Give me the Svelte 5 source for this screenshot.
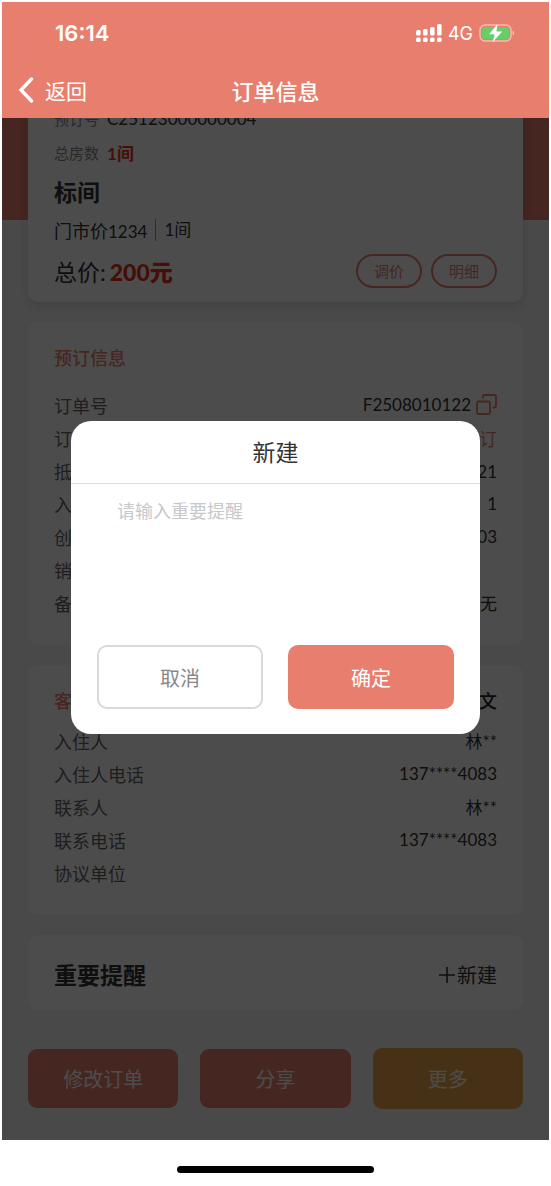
<script>
  let reminder = $state('');
  let showModal = $state(true);

  const booking = [
    { label: '订单号', value: 'F2508010122', copy: true },
    { label: '订单状态', value: '预订', accent: true },
    { label: '抵离时间', value: '2025-08-01 至 08-21' },
    { label: '入住天数', value: '1' },
    { label: '创建时间', value: '2025-08-01 15:03' },
    { label: '销售员', value: '' },
    { label: '备注', value: '无' }
  ];

  const guest = [
    { label: '入住人', value: '林**' },
    { label: '入住人电话', value: '137****4083' },
    { label: '联系人', value: '林**' },
    { label: '联系电话', value: '137****4083' },
    { label: '协议单位', value: '' }
  ];
</script>

<div class="phone">
  <header>
    <div class="status">
      <span class="time">16:14</span>
      <div class="signals">
        <svg width="26" height="19" viewBox="0 0 26 19" fill="#fff">
          <rect x="0" y="6" width="4.600" height="5.500" rx="1.500" />
          <rect x="7" y="5" width="4.600" height="6.500" rx="1.500" />
          <rect x="14" y="3" width="4.600" height="8.500" rx="1.500" />
          <rect x="21" y="0" width="4.600" height="11.500" rx="1.500" />
          <rect x="0" y="13.500" width="4.600" height="4.500" rx="1.500" />
          <rect x="7" y="13.500" width="4.600" height="4.500" rx="1.500" />
          <rect x="14" y="13.500" width="4.600" height="4.500" rx="1.500" />
          <rect x="21" y="13.500" width="4.600" height="4.500" rx="1.500" />
        </svg>
        <span class="net">4G</span>
        <svg width="36" height="18" viewBox="0 0 36 18">
          <rect x="1" y="1" width="31" height="16" rx="5" fill="none" stroke="#f4bdb4" stroke-width="1.400" />
          <rect x="3" y="3" width="27" height="12" rx="3" fill="#65cf68" />
          <path d="M33.500 6.500q1.800 .7 1.800 2.500t-1.800 2.500z" fill="#f4bdb4" />
          <path d="M18.500 0L10 10.300H15.600L13.800 18L23.200 7.500H17.400z" fill="#fff" />
        </svg>
      </div>
    </div>
    <nav>
      <button class="back">
        <svg width="16" height="26" viewBox="0 0 16 26" fill="none" stroke="#fff" stroke-width="3.400">
          <path d="M13.500 2L3 13L13.500 24" stroke-linecap="round" />
        </svg>
        返回
      </button>
      <h1>订单信息</h1>
    </nav>
  </header>

  <main>
    <section class="card summary">
      <div class="line small"><span>预订号</span><b class="code">C25123000000004</b></div>
      <div class="line small"><span>总房数</span><b class="red">1间</b></div>
      <h2>标间</h2>
      <div class="line price"><span>门市价<span class="num">1234</span></span><span class="rooms">1间</span></div>
      <div class="total">
        <span>总价:</span>
        <strong>200元</strong>
        <button class="pill">调价</button>
        <button class="pill">明细</button>
      </div>
    </section>

    <section class="card booking">
      <h3>预订信息</h3>
      <dl>
        {#each booking as row}
          <div class="row">
            <dt>{row.label}</dt>
            <dd class:accent={row.accent}>
              {row.value}
              {#if row.copy}
                <button class="copy" aria-label="复制">
                  <svg width="21" height="21" viewBox="0 0 21 21" fill="none" stroke="#e87f6e" stroke-width="1.800">
                    <rect x="1" y="7.500" width="13" height="12.500" rx="1.500" />
                    <path d="M7 4.500V2.500Q7 1 8.500 1H18.500Q20 1 20 2.500V12Q20 13.500 18.500 13.500H16.500" />
                  </svg>
                </button>
              {/if}
            </dd>
          </div>
        {/each}
      </dl>
    </section>

    <section class="card guest">
      <h3>客户信息 <span>中文</span></h3>
      <dl>
        {#each guest as row}
          <div class="row">
            <dt>{row.label}</dt>
            <dd>{row.value}</dd>
          </div>
        {/each}
      </dl>
    </section>

    <section class="card remind">
      <h2>重要提醒</h2>
      <button class="add" onclick={() => (showModal = true)}>
        <svg width="18" height="18" viewBox="0 0 18 18" stroke="#333" stroke-width="1.600">
          <path d="M9 1V17M1 9H17" />
        </svg>
        新建
      </button>
    </section>

    <div class="actions">
      <button>修改订单</button>
      <button>分享</button>
      <button class="more">更多</button>
    </div>

    {#if showModal}
      <div class="mask">
        <div class="modal" role="dialog" aria-labelledby="modalTitle">
          <h2 id="modalTitle">新建</h2>
          <textarea aria-label="重要提醒" placeholder="请输入重要提醒" bind:value={reminder}></textarea>
          <div class="modal-btns">
            <button class="cancel" onclick={() => (showModal = false)}>取消</button>
            <button class="ok" onclick={() => (showModal = false)}>确定</button>
          </div>
        </div>
      </div>
    {/if}
  </main>

  <footer><span class="home"></span></footer>
</div>

<style>
  :global(body) {
    background: #fff;
  }

  .phone {
    --primary: #e87f6e;
    padding: 2px 2px 0;
    font-family: Lato, "Noto Sans CJK SC", sans-serif;
    font-size: 18px;
    color: #333;
  }

  h1, h2, h3, dl, dd {
    margin: 0;
  }

  button {
    font: inherit;
    color: inherit;
    background: none;
    border: none;
    padding: 0;
    cursor: pointer;
  }

  svg {
    display: block;
    flex: none;
  }

  header {
    background: var(--primary);
    color: #fff;
  }

  .status {
    height: 62px;
    padding: 0 34px 0 53px;
    display: flex;
    align-items: center;
    justify-content: space-between;
    font-family: Inter, sans-serif;
  }

  .time {
    font-size: 22px;
    font-weight: 600;
  }

  .signals {
    display: flex;
    align-items: center;
    gap: 6px;
  }

  .net {
    font-size: 18px;
  }

  nav {
    height: 51px;
    display: grid;
    grid-template-columns: 1fr auto 1fr;
    align-items: center;
    padding: 0 16px 3px;
  }

  .back {
    justify-self: start;
    display: flex;
    align-items: center;
    gap: 11px;
    font-size: 21px;
  }

  h1 {
    font-size: 22px;
    font-weight: 500;
  }

  main {
    position: relative;
    overflow: hidden;
    background: linear-gradient(var(--primary) 102px, #f5f5f5 102px);
    padding: 0 26px 31px;
    display: flex;
    flex-direction: column;
    gap: 20px;
  }

  .card {
    background: #fff;
    border-radius: 10px;
    padding: 17px 26px 26px;
  }

  /* scrolled part way under the header */
  .summary {
    margin-top: -17px;
    padding: 0 26px 5px;
    box-shadow: 0 4px 12px rgba(0, 0, 0, 0.12);
  }

  .line {
    display: flex;
    align-items: center;
  }

  .small {
    height: 34px;
    gap: 8px;
  }

  .small span {
    font-size: 15px;
    color: #888;
  }

  .small b {
    font-size: 17px;
  }

  .small .code {
    font-weight: 400;
  }

  .small .red,
  strong {
    color: #e8341a;
    font-weight: 700;
  }

  .summary h2 {
    line-height: 46px;
  }

  h2 {
    font-size: 23px;
    font-weight: 700;
  }

  .price {
    height: 30px;
  }

  .num {
    font-size: 17px;
  }

  .rooms {
    font-size: 17px;
    line-height: 22px;
    margin-left: 8px;
    padding-left: 8px;
    border-left: 1px solid #999;
  }

  .total {
    height: 52px;
    display: flex;
    align-items: center;
    font-size: 23px;
  }

  strong {
    margin: 0 auto 0 4px;
    font-weight: 900;
  }

  .pill {
    width: 66px;
    height: 34px;
    margin-left: 9px;
    border: 2px solid var(--primary);
    border-radius: 17px;
    color: var(--primary);
    font-size: 15px;
    line-height: 15px;
  }

  h3 {
    display: flex;
    justify-content: space-between;
    font-size: 18px;
    font-weight: 500;
    line-height: 38px;
    color: var(--primary);
  }

  h3 span {
    color: #222;
  }

  .booking dl {
    margin-top: 11px;
  }

  .guest dl {
    margin-top: 4px;
  }

  .row {
    height: 33px;
    display: flex;
    align-items: center;
    justify-content: space-between;
  }

  dt {
    color: #666;
  }

  dd {
    display: flex;
    align-items: center;
    gap: 5px;
    font-size: 17px;
  }

  dd.accent {
    color: var(--primary);
    font-size: 18px;
  }

  .remind {
    padding: 23px 26px 18px;
    display: flex;
    align-items: center;
    justify-content: space-between;
  }

  .remind h2 {
    line-height: 34px;
  }

  .add {
    display: flex;
    align-items: center;
    gap: 1px;
    font-size: 20px;
    line-height: 34px;
  }

  .actions {
    margin-top: 18px;
    display: flex;
    align-items: center;
    gap: 22px;
  }

  .actions button {
    flex: 1;
    height: 59px;
    border-radius: 9px;
    background: var(--primary);
    color: #fff;
    font-size: 20px;
  }

  .actions .more {
    height: 61px;
    background: #efa64b;
  }

  .mask {
    position: absolute;
    inset: 0;
    background: rgba(0, 0, 0, 0.7);
    padding: 303px 69px 0;
  }

  .modal {
    background: #fff;
    border-radius: 20px;
    overflow: hidden;
  }

  .modal h2 {
    font-weight: 400;
    line-height: 62px;
    text-align: center;
    border-bottom: 1px solid #ddd;
  }

  textarea {
    display: block;
    box-sizing: border-box;
    width: 100%;
    height: 161px;
    padding: 14px 46px;
    border: none;
    outline: none;
    resize: none;
    font: inherit;
    line-height: 26px;
  }

  textarea::placeholder {
    color: #c8c8cc;
  }

  .modal-btns {
    display: grid;
    grid-template-columns: 1fr 1fr;
    gap: 25px;
    padding: 0 26px 25px;
  }

  .modal-btns button {
    height: 64px;
    border-radius: 10px;
    font-size: 20px;
  }

  .modal-btns .cancel {
    border: 2px solid #d9d9d9;
    color: #888;
  }

  .modal-btns .ok {
    background: var(--primary);
    color: #fff;
  }

  footer {
    height: 46px;
    display: flex;
    justify-content: center;
    align-items: flex-end;
  }

  .home {
    width: 36%;
    height: 7px;
    margin-bottom: 13px;
    border-radius: 4px;
    background: #000;
  }
</style>
